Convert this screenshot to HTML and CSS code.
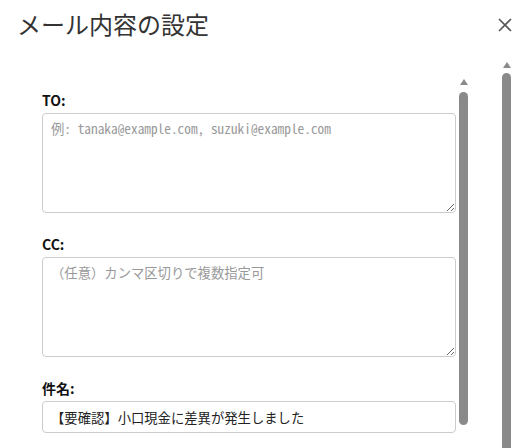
FILE: index.html
```html
<!DOCTYPE html>
<html lang="ja">
<head>
    <meta charset="UTF-8">
    <meta name="viewport" content="width=device-width, initial-scale=1.0">
    <title>メール内容の設定</title>
    <link rel="stylesheet" href="styles.css">
</head>
<body>
    <div class="modal">
        <div class="modal-header">
            <h2 class="modal-title">メール内容の設定</h2>
            <button class="close-btn" type="button" aria-label="閉じる">
                <svg width="14" height="14" viewBox="0 0 14 14">
                    <path d="M1 1 L13 13 M13 1 L1 13" stroke="#555" stroke-width="1.6" fill="none"/>
                </svg>
            </button>
        </div>
        <div class="modal-body">
            <div class="body-main">
                <div class="form-pane">
                    <div class="form-scroll">
                        <div class="field">
                            <label class="field-label" for="mailTo">TO:</label>
                            <textarea id="mailTo" class="field-area" placeholder="例: tanaka@example.com, suzuki@example.com"></textarea>
                        </div>
                        <div class="field">
                            <label class="field-label" for="mailCc">CC:</label>
                            <textarea id="mailCc" class="field-area" placeholder="（任意）カンマ区切りで複数指定可"></textarea>
                        </div>
                        <div class="field">
                            <label class="field-label" for="mailSubject">件名:</label>
                            <input id="mailSubject" class="field-input" type="text" value="【要確認】小口現金に差異が発生しました">
                        </div>
                    </div>
                    <div class="scrollbar scrollbar-inner">
                        <span class="scroll-arrow"></span>
                        <span class="scroll-thumb"></span>
                    </div>
                </div>
            </div>
            <div class="scrollbar scrollbar-outer">
                <span class="scroll-arrow"></span>
                <span class="scroll-thumb"></span>
            </div>
        </div>
    </div>
</body>
</html>
```

FILE: styles.css
```css
body {
    margin: 0;
    background: #fff;
    font-family: "Noto Sans CJK JP", "Noto Sans", sans-serif;
    color: #333;
}
.modal {
    width: 524px;
    height: 448px;
    overflow: hidden;
    display: flex;
    flex-direction: column;
}
.modal-header {
    height: 57px;
    box-sizing: border-box;
    padding: 0 12px 0 17px;
    display: flex;
    justify-content: space-between;
    align-items: flex-start;
}
.modal-title {
    margin: 0;
    padding-top: 7px;
    font-size: 24px;
    font-weight: normal;
    line-height: 34px;
    color: #333;
}
.close-btn {
    margin-top: 18px;
    padding: 0;
    border: none;
    background: none;
    width: 14px;
    height: 14px;
    cursor: pointer;
}
.close-btn svg {
    display: block;
}
.modal-body {
    flex: 1;
    display: flex;
    min-height: 0;
    padding-right: 10px;
}
.body-main {
    flex: 1;
    padding: 18px 28px 0 26px;
    overflow: hidden;
}
.form-pane {
    display: flex;
    height: 100%;
}
.form-scroll {
    flex: 1;
    padding: 15px 0 0 16px;
}
.field {
    margin-bottom: 21px;
}
.field-label {
    display: block;
    font-size: 14px;
    font-weight: bold;
    line-height: 20px;
    margin-bottom: 3px;
    color: #111;
}
.field-area,
.field-input {
    display: block;
    width: 100%;
    box-sizing: border-box;
    border: 1px solid #ccc;
    border-radius: 4px;
    background: #fff;
    color: #222;
    margin: 0;
}
.field-area {
    height: 100px;
    padding: 6px 8px;
    font-family: "Noto Sans Mono CJK JP", monospace;
    font-size: 13.333px;
    line-height: 1.4;
}
.field-input {
    height: 32px;
    padding: 0 8px;
    font-family: "Noto Sans CJK JP", sans-serif;
    font-size: 13.333px;
}
.field-area::placeholder {
    color: #999;
}

/* drawn scrollbars */
.scrollbar {
    width: 15px;
    display: flex;
    flex-direction: column;
    align-items: center;
}
.scroll-arrow {
    width: 0;
    height: 0;
    border-left: 4px solid transparent;
    border-right: 4px solid transparent;
    border-bottom: 6px solid #8a8a8a;
}
.scroll-thumb {
    width: 9px;
    border-radius: 4.5px;
    background: #8a8a8a;
}
.scrollbar-inner .scroll-arrow {
    margin-top: 4px;
}
.scrollbar-inner .scroll-thumb {
    margin-top: 7px;
    height: 333px;
}
.scrollbar-outer .scroll-arrow {
    margin-top: 5px;
}
.scrollbar-outer .scroll-thumb {
    margin-top: 5px;
    flex: 1;
    border-radius: 4.5px 4.5px 0 0;
}
```
